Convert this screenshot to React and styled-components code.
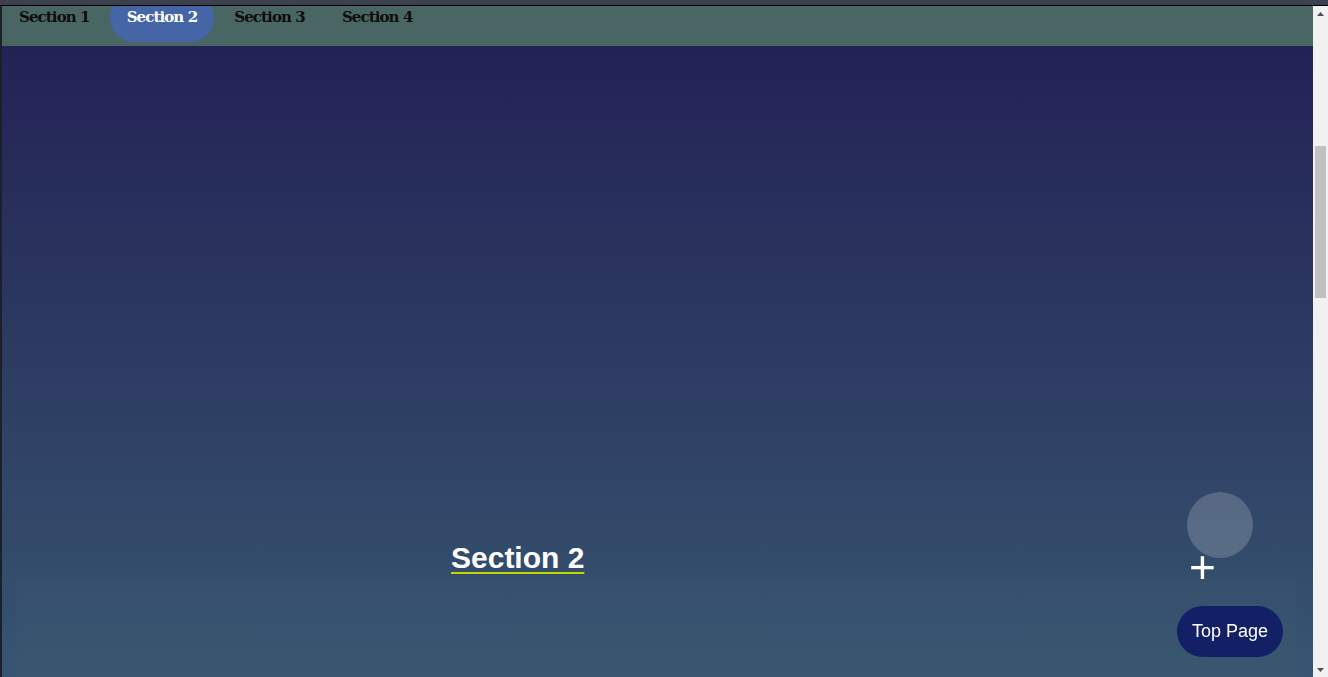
import React, { useLayoutEffect, useRef, useState } from "react";
import styled, { createGlobalStyle } from "styled-components";

const Global = createGlobalStyle`
  html, body { margin: 0; padding: 0; height: 100%; overflow: hidden; background: #3c4150; }
  #root { height: 100%; }
  * { box-sizing: border-box; }
`;

const Shell = styled.div`
  height: 100vh;
  display: flex;
  flex-direction: column;
`;

const TopStrip = styled.div`
  flex: 0 0 6px;
  background: #3c4150;
  border-bottom: 1px solid #000;
`;

const Body = styled.div`
  flex: 1;
  min-height: 0;
  display: flex;
`;

const Scroller = styled.main`
  flex: 1;
  min-width: 0;
  overflow-y: scroll;
  scrollbar-width: none;
  border-left: 2px solid #1b202b;
  background: #232255;
  &::-webkit-scrollbar { display: none; }
`;

const Rail = styled.div`
  flex: 0 0 15px;
  display: flex;
  flex-direction: column;
  background: #f1f1f1;
`;

const RailButton = styled.div`
  flex: 0 0 15px;
  display: flex;
  align-items: center;
  justify-content: center;
`;

const Track = styled.div`
  flex: 1;
  position: relative;
`;

const Thumb = styled.div`
  position: absolute;
  left: 2px;
  right: 2px;
  background: #c1c1c1;
`;

const Nav = styled.nav`
  position: sticky;
  top: 0;
  z-index: 5;
  height: 40px;
  background: #4a6664;
  display: flex;
  align-items: flex-start;
  gap: 3px;
  overflow: hidden;
`;

const NavItem = styled.a`
  height: 48px;
  margin-top: -12px;
  padding: 0 17px 2px 17px;
  display: flex;
  align-items: center;
  border-radius: 24px;
  font-family: "DejaVu Serif", "Liberation Serif", serif;
  font-size: 15px;
  font-weight: 700;
  letter-spacing: -0.9px;
  color: ${(p) => (p.$active ? "#ffffff" : "#0d0d0d")};
  background: ${(p) => (p.$active ? "#4565a6" : "transparent")};
  text-decoration: none;
  cursor: pointer;
`;

const Section = styled.section`
  height: ${(p) => p.$h}px;
  padding-top: ${(p) => p.$pt}px;
  background: ${(p) => p.$bg};
`;

const Heading = styled.h2`
  margin: 0 0 4px 449px;
  font-family: "Liberation Sans", Arial, sans-serif;
  font-size: 30px;
  font-weight: 700;
  line-height: normal;
  color: #ffffff;
  text-decoration: underline;
  text-decoration-color: #c2d600;
  text-decoration-thickness: 2px;
  text-underline-offset: 4px;
`;

const Panel = styled.div`
  margin: 0 16px 0 15px;
  height: 480px;
  background: rgba(255, 255, 255, 0.01);
`;

const FloatStack = styled.div`
  position: fixed;
  right: 45px;
  bottom: 20px;
  width: 106px;
  display: flex;
  flex-direction: column;
  align-items: flex-start;
  z-index: 10;
`;

const Bubble = styled.div`
  width: 66px;
  height: 66px;
  margin-left: 10px;
  border-radius: 50%;
  background: rgba(255, 255, 255, 0.19);
`;

const Plus = styled.span`
  margin: -14px 0 0 12px;
  font-family: "Liberation Sans", Arial, sans-serif;
  font-size: 46px;
  line-height: 1;
  color: #ffffff;
`;

const TopButton = styled.button`
  margin-top: 16px;
  width: 106px;
  height: 51px;
  border: none;
  border-radius: 26px;
  background: #132066;
  color: #ffffff;
  font-family: "Liberation Sans", Arial, sans-serif;
  font-size: 18px;
  padding: 0;
  cursor: pointer;
`;

const sections = [
  { id: 1, h: 552, pt: 200, bg: "#232255" },
  {
    id: 2,
    h: 1100,
    pt: 495,
    bg: "linear-gradient(180deg, #232255 0px, #375570 631px, #3f6580 1100px)",
  },
  { id: 3, h: 569, pt: 200, bg: "#3f6580" },
  { id: 4, h: 569, pt: 200, bg: "#40667f" },
];

const Arrow = ({ up }) => (
  <svg width="7" height="4" viewBox="0 0 7 4">
    <polygon points={up ? "0,4 7,4 3.5,0" : "0,0 7,0 3.5,4"} fill="#505050" />
  </svg>
);

export default function App() {
  const ref = useRef(null);
  const trackRef = useRef(null);
  const [thumb, setThumb] = useState({ top: 125, height: 152 });

  const measure = () => {
    const el = ref.current;
    const tr = trackRef.current;
    if (!el || !tr) return;
    const th = tr.clientHeight;
    setThumb({
      top: (th * el.scrollTop) / el.scrollHeight,
      height: (th * el.clientHeight) / el.scrollHeight,
    });
  };

  useLayoutEffect(() => {
    if (ref.current) ref.current.scrollTop = 552;
    measure();
  }, []);

  return (
    <>
      <Global />
      <Shell>
        <TopStrip />
        <Body>
          <Scroller ref={ref} onScroll={measure}>
            <Nav>
              {sections.map((s) => (
                <NavItem key={s.id} $active={s.id === 2}>
                  Section {s.id}
                </NavItem>
              ))}
            </Nav>
            {sections.map((s) => (
              <Section key={s.id} $h={s.h} $pt={s.pt} $bg={s.bg}>
                {s.id === 2 ? (
                  <>
                    <Heading>Section 2</Heading>
                    <Panel />
                  </>
                ) : (
                  <Heading>Section {s.id}</Heading>
                )}
              </Section>
            ))}
          </Scroller>
          <Rail>
            <RailButton>
              <Arrow up />
            </RailButton>
            <Track ref={trackRef}>
              <Thumb style={{ top: thumb.top, height: thumb.height }} />
            </Track>
            <RailButton>
              <Arrow />
            </RailButton>
          </Rail>
        </Body>
        <FloatStack>
          <Bubble />
          <Plus>+</Plus>
          <TopButton>Top Page</TopButton>
        </FloatStack>
      </Shell>
    </>
  );
}
